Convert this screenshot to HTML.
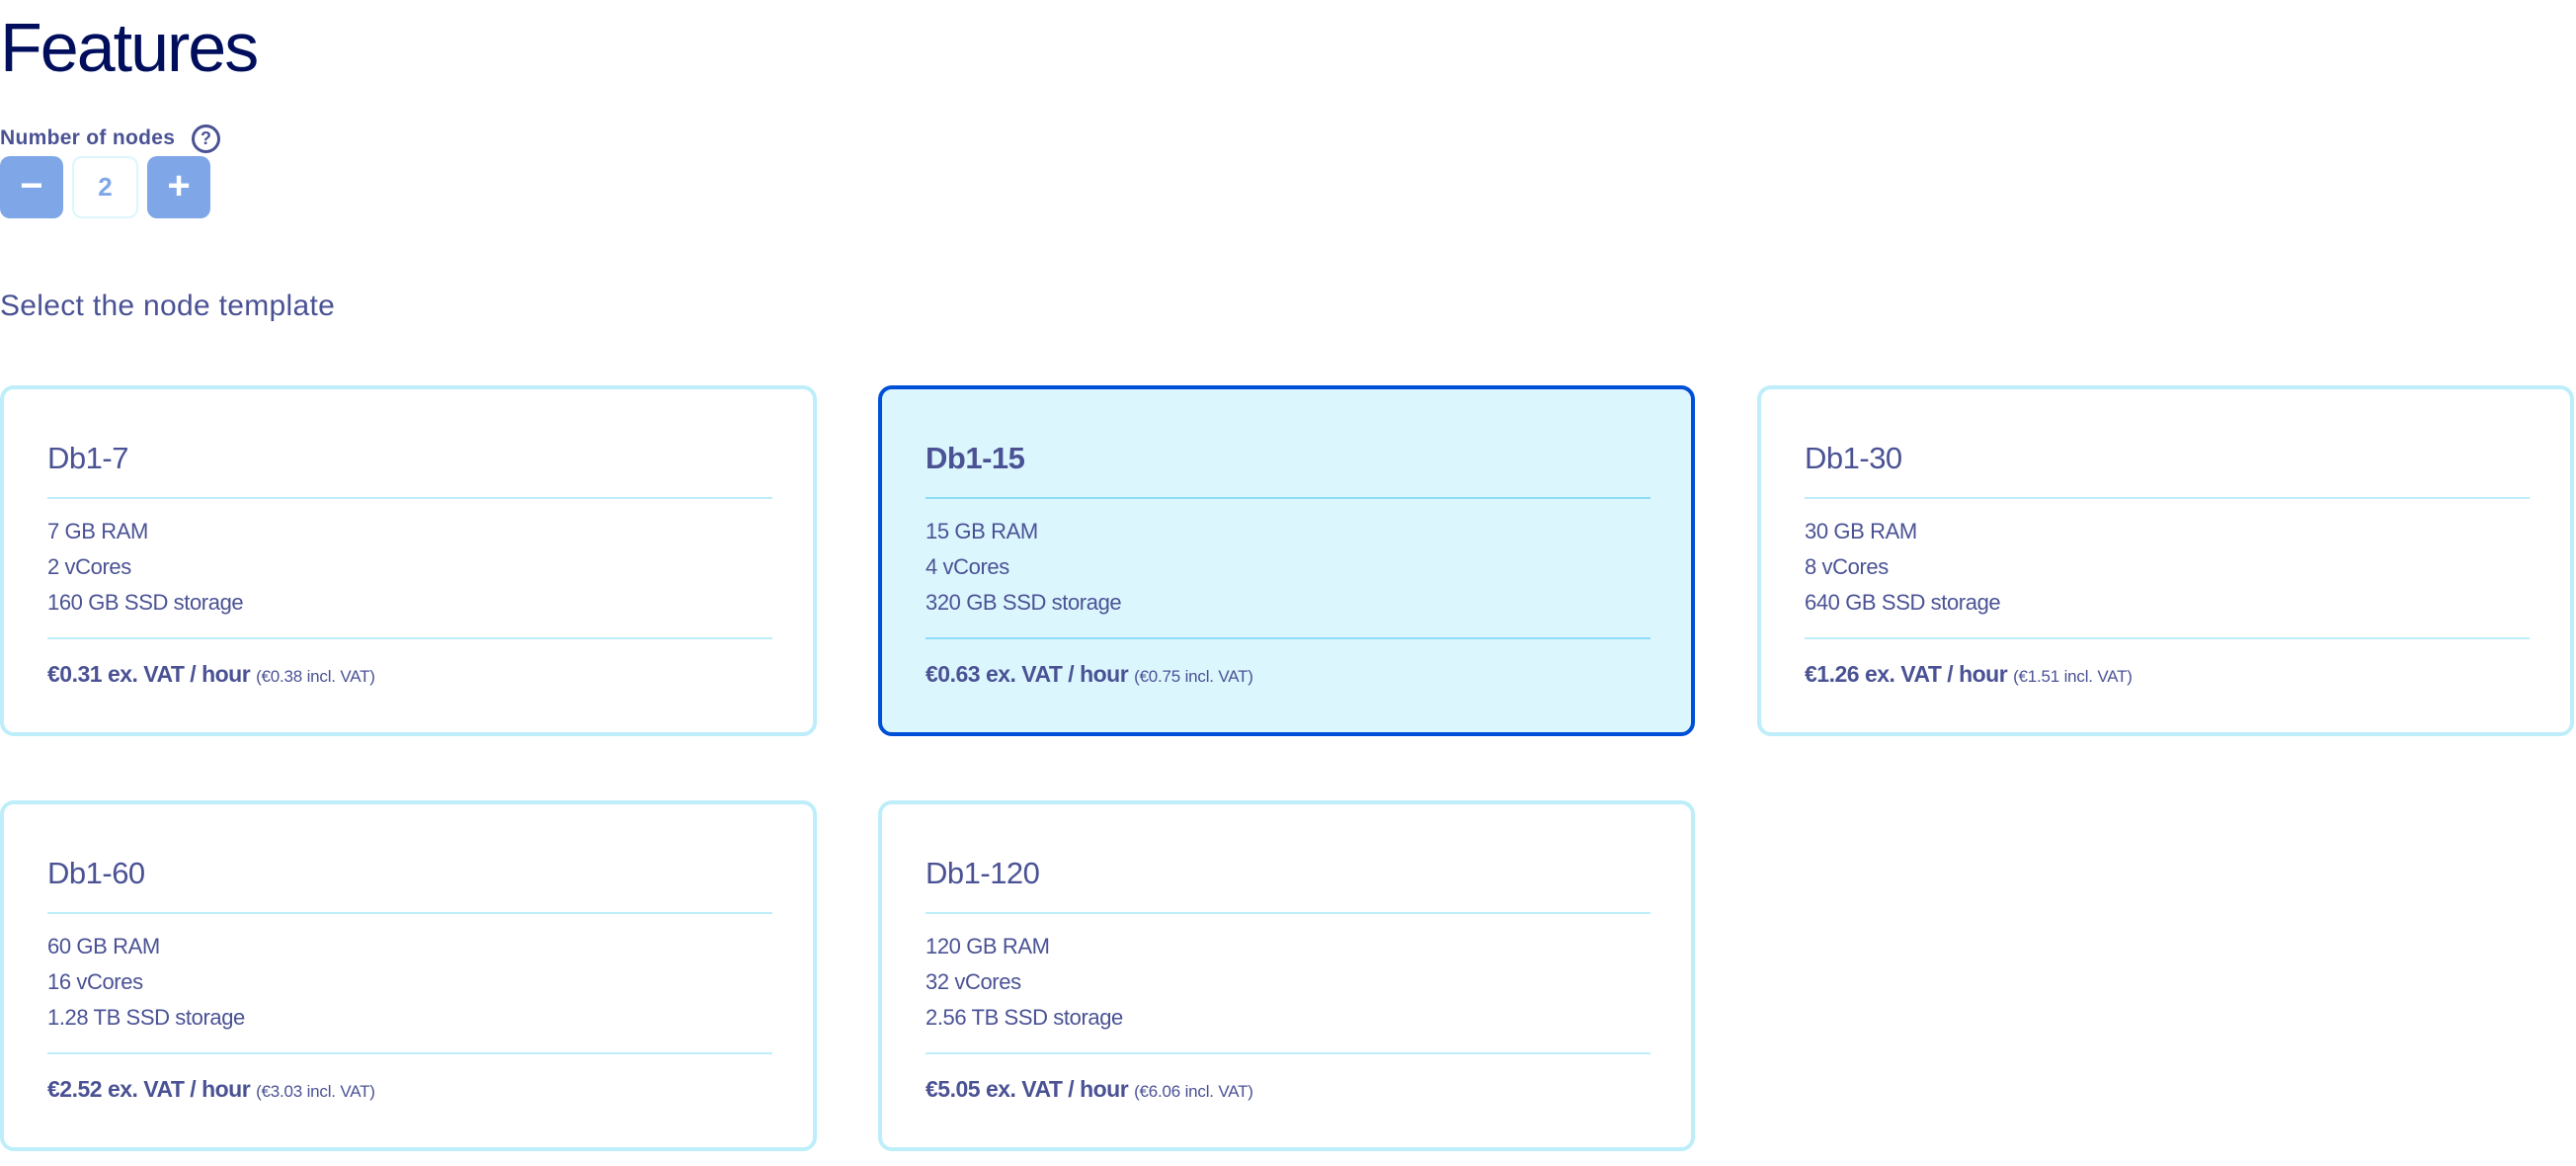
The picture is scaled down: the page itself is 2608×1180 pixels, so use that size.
<!DOCTYPE html>
<html><head><meta charset="utf-8"><style>
*{margin:0;padding:0;box-sizing:border-box}
body{width:2608px;height:1180px;background:#fff;position:relative;overflow:hidden;font-family:"Liberation Sans",sans-serif;color:#4a5294}
.abs{position:absolute}
h1{position:absolute;left:0;top:6px;font-weight:400;font-size:70px;color:#000e5c;letter-spacing:-2px;line-height:84px}
.lbl{left:0;top:126px;font-weight:700;font-size:21px;letter-spacing:0.3px;line-height:28px}
.q{left:194px;top:126px;width:29px;height:29px;border:3px solid #4a5294;border-radius:50%;font-weight:700;font-size:18px;text-align:center;line-height:23px}
.btn{top:158px;width:64px;height:63px;background:#7fa7e8;border-radius:10px;color:#fff;font-size:40px;font-weight:700;text-align:center;line-height:60px}
.inp{left:73px;top:158px;width:67px;height:63px;border:2px solid #dcf6fe;border-radius:10px;color:#7fa7e8;font-size:26px;font-weight:700;text-align:center;line-height:59px}
.sel{left:0;top:292px;font-size:30px;line-height:36px;letter-spacing:0.3px}
.card{position:absolute;width:827px;height:355px;border:4px solid #bdeefa;border-radius:14px;background:#fff}
.card.on{border-color:#0050d7;background:#dcf6fe}
.card .t{position:absolute;left:44px;top:52px;font-size:31px;line-height:36px;letter-spacing:-0.5px}
.card.on .t{font-weight:700}
.card .d{position:absolute;left:44px;width:734px;height:2px;background:#bdeefa}
.card.on .d{background:#8cdcf5}
.card .s{position:absolute;left:44px;font-size:22px;line-height:28px;letter-spacing:-0.4px}
.card .p{position:absolute;left:44px;top:274px;font-size:23px;line-height:28px;font-weight:700;letter-spacing:-0.5px}
.card .p small{font-size:17px;font-weight:400;letter-spacing:-0.2px}
</style></head><body>
<h1>Features</h1>
<div class="abs lbl">Number of nodes</div>
<div class="abs q">?</div>
<div class="abs btn" style="left:0">−</div>
<div class="abs inp">2</div>
<div class="abs btn" style="left:149px">+</div>
<div class="abs sel">Select the node template</div>

<div class="card" style="left:0;top:390px"><div class="t">Db1-7</div><div class="d" style="top:109px"></div><div class="s" style="top:130px">7 GB RAM</div><div class="s" style="top:166px">2 vCores</div><div class="s" style="top:202px">160 GB SSD storage</div><div class="d" style="top:251px"></div><div class="p">€0.31 ex. VAT / hour <small>(€0.38 incl. VAT)</small></div></div>
<div class="card on" style="left:889px;top:390px"><div class="t">Db1-15</div><div class="d" style="top:109px"></div><div class="s" style="top:130px">15 GB RAM</div><div class="s" style="top:166px">4 vCores</div><div class="s" style="top:202px">320 GB SSD storage</div><div class="d" style="top:251px"></div><div class="p">€0.63 ex. VAT / hour <small>(€0.75 incl. VAT)</small></div></div>
<div class="card" style="left:1779px;top:390px"><div class="t">Db1-30</div><div class="d" style="top:109px"></div><div class="s" style="top:130px">30 GB RAM</div><div class="s" style="top:166px">8 vCores</div><div class="s" style="top:202px">640 GB SSD storage</div><div class="d" style="top:251px"></div><div class="p">€1.26 ex. VAT / hour <small>(€1.51 incl. VAT)</small></div></div>
<div class="card" style="left:0;top:810px"><div class="t">Db1-60</div><div class="d" style="top:109px"></div><div class="s" style="top:130px">60 GB RAM</div><div class="s" style="top:166px">16 vCores</div><div class="s" style="top:202px">1.28 TB SSD storage</div><div class="d" style="top:251px"></div><div class="p">€2.52 ex. VAT / hour <small>(€3.03 incl. VAT)</small></div></div>
<div class="card" style="left:889px;top:810px"><div class="t">Db1-120</div><div class="d" style="top:109px"></div><div class="s" style="top:130px">120 GB RAM</div><div class="s" style="top:166px">32 vCores</div><div class="s" style="top:202px">2.56 TB SSD storage</div><div class="d" style="top:251px"></div><div class="p">€5.05 ex. VAT / hour <small>(€6.06 incl. VAT)</small></div></div>
</body></html>
